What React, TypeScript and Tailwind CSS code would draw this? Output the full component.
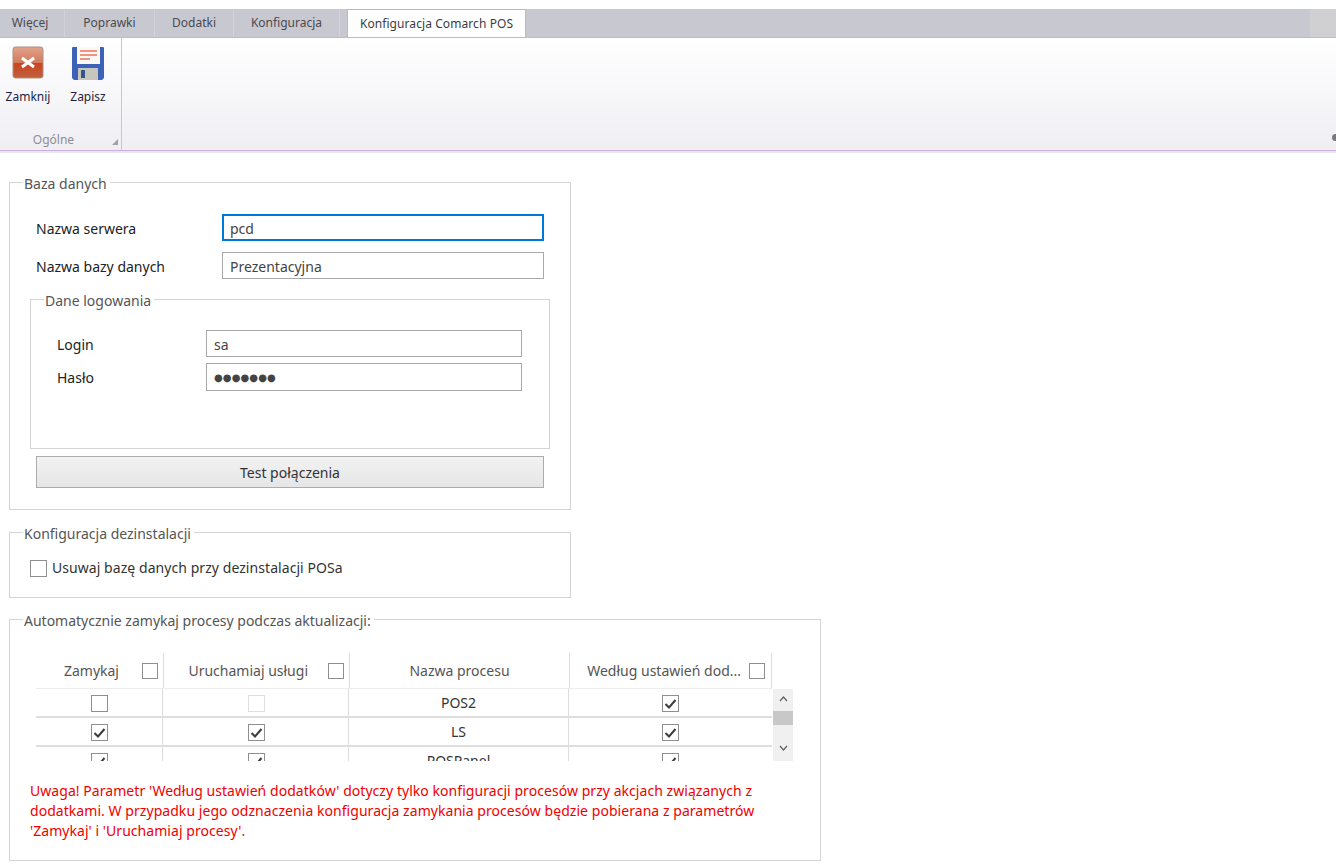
import React from 'react';

const FONT = "font-['Noto_Sans','Open_Sans',sans-serif]";

const tabs = [
  { label: 'Więcej', width: 'w-[65px] pr-[4px]' },
  { label: 'Poprawki', width: 'w-[90px]' },
  { label: 'Dodatki', width: 'w-[79px]' },
  { label: 'Konfiguracja', width: 'w-[106px]' },
];

const CloseIcon = () => (
  <svg width="32" height="33" viewBox="0 0 32 33">
    <defs>
      <linearGradient id="closeBg" x1="0" y1="0" x2="0" y2="1">
        <stop offset="0" stopColor="#e2a48c" />
        <stop offset="0.5" stopColor="#d27a5c" />
        <stop offset="0.52" stopColor="#c9441f" />
        <stop offset="1" stopColor="#c2603f" />
      </linearGradient>
    </defs>
    <rect x="1" y="1" width="30" height="31" rx="2.5" fill="url(#closeBg)" stroke="#a9917f" />
    <path d="M10 12l12 9M22 12l-12 9" stroke="#fff" strokeWidth="3.2" />
  </svg>
);

const SaveIcon = () => (
  <svg width="34" height="35" viewBox="0 0 34 35">
    <path d="M1 2a1 1 0 0 1 1-1h30a1 1 0 0 1 1 1v30l-2 2H3l-2-2z" fill="#3c62b8" />
    <rect x="6" y="1" width="23" height="17" fill="#fbf8f6" />
    <path d="M9 5h17M9 9h17M9 13h10" stroke="#f0705a" strokeWidth="1.6" />
    <rect x="7" y="22" width="20" height="12" fill="#c6c6bc" />
    <rect x="10" y="24" width="4" height="8" fill="#35558f" />
  </svg>
);

const Ribbon = () => (
  <div>
    <div className="h-[9px] bg-white" />
    <div className="flex h-[28px] bg-[#c8c8d0]">
      {tabs.map((t) => (
        <div
          key={t.label}
          className={`${t.width} flex items-center justify-center border-r border-[#d2d2d8] text-xs text-[#4a4a50]`}
        >
          {t.label}
        </div>
      ))}
      <div className="w-[7px]" />
      <div className="flex w-[179px] items-center justify-center border-x border-t border-[#c9a9e6] bg-white text-xs tracking-[0.08px] text-[#3c3c40]">
        Konfiguracja Comarch POS
      </div>
      <div className="flex-1" />
      <div className="w-[26px] bg-[#d0d0d2]" />
    </div>
    <div className="relative flex h-[114px] border-y border-[#cdaee8] bg-gradient-to-b from-white to-[#efeef3]">
      <div className="flex w-[122px] flex-col border-r border-[#c8c8cc]">
        <div className="flex h-[88px] gap-[10px] pl-[3px] pt-[8px]">
          <div className="flex w-[50px] flex-col items-center">
            <CloseIcon />
            <span className="mt-[10px] text-xs text-[#1e1e3c]">Zamknij</span>
          </div>
          <div className="flex w-[50px] flex-col items-center">
            <SaveIcon />
            <span className="mt-[8px] text-xs text-[#1e1e3c]">Zapisz</span>
          </div>
        </div>
        <div className="relative flex flex-1 items-center justify-center pr-[14px] pt-[4px] text-xs text-[#8e8e96]">
          Ogólne
          <span className="absolute bottom-[5px] right-[3px] h-0 w-0 border-b-[6px] border-l-[6px] border-b-[#a0a0a6] border-l-transparent" />
        </div>
      </div>
      <span className="absolute bottom-[9px] right-0 h-[7px] w-[4px] rounded-l-full bg-[#77777c]" />
    </div>
    <div className="h-[2px] bg-[#e8e8ea]" />
  </div>
);

const Check = ({ checked, size = 'h-[17px] w-[17px]', dim }: { checked?: boolean; size?: string; dim?: boolean }) => (
  <span
    className={`${size} flex shrink-0 items-center justify-center border bg-white ${dim ? 'border-[#dedede]' : 'border-[#8f8f8f]'}`}
  >
    {checked && (
      <svg width="13" height="13" viewBox="0 0 13 13">
        <path d="M1.5 7l3.5 3.5L11.5 3" fill="none" stroke="#3c3c3c" strokeWidth="2" />
      </svg>
    )}
  </span>
);

const Field = ({ value, focused, pad, height, width }: { value: React.ReactNode; focused?: boolean; pad: string; width: string; height: string }) => (
  <div
    className={`${width} ${height} ${pad} flex items-center text-sm text-[#444] ${
      focused ? 'border-2 border-[#0078d7] pl-[6px]' : 'border border-[#a9a9a9] pl-[7px]'
    }`}
  >
    {value}
  </div>
);

const Group = ({ title, className, children }: { title: string; className: string; children: React.ReactNode }) => (
  <fieldset className={`${className} border border-[#d4d4d4]`}>
    <legend className="ml-[13px] h-[20px] px-[1px] pr-[3px] text-sm leading-[24px] text-[#555]">{title}</legend>
    {children}
  </fieldset>
);

const rows = [
  { zamykaj: false, usl: false, uslDim: true, name: 'POS2', wg: true },
  { zamykaj: true, usl: true, name: 'LS', wg: true },
  { zamykaj: true, usl: true, name: 'POSPanel', wg: true },
];

const ProcessTable = () => (
  <div className="ml-[26px] flex">
    <div>
      <div className="flex h-[36px] border-b border-[#ececec] text-sm text-[#555]">
        <div className="flex w-[128px] items-center justify-end gap-[23px] border-r border-[#dcdcdc] pr-[5px]">
          Zamykaj <Check size="h-[16px] w-[16px]" />
        </div>
        <div className="flex w-[186px] items-center justify-end gap-[20px] border-r border-[#dcdcdc] pr-[5px]">
          Uruchamiaj usługi <Check size="h-[16px] w-[16px]" />
        </div>
        <div className="flex w-[220px] items-center justify-center border-r border-[#dcdcdc]">Nazwa procesu</div>
        <div className="flex w-[202px] items-center justify-end gap-[8px] border-r border-[#dcdcdc] pr-[6px]">
          Według ustawień dod... <Check size="h-[16px] w-[16px]" />
        </div>
      </div>
      <div className="h-[72px] overflow-hidden">
        {rows.map((r) => (
          <div key={r.name} className="flex h-[29px] border-b-2 border-[#dedede] text-sm text-[#333]">
            <div className="flex w-[127px] items-center justify-center border-r border-[#dcdcdc] pt-[2px]">
              <Check checked={r.zamykaj} />
            </div>
            <div className="ml-px flex w-[185px] items-center justify-center border-r border-[#dcdcdc] pt-[2px]">
              <Check checked={r.usl} dim={r.uslDim} />
            </div>
            <div className="flex w-[220px] items-center justify-center border-r border-[#dcdcdc] pt-[1px]">{r.name}</div>
            <div className="flex w-[202px] items-center justify-center pt-[2px]">
              <Check checked={r.wg} />
            </div>
          </div>
        ))}
      </div>
    </div>
    <div className="mt-[36px] ml-px flex h-[72px] w-[20px] flex-col items-center bg-[#f0f0f0] text-[#555]">
      <svg className="mt-[7px]" width="9" height="6" viewBox="0 0 9 6">
        <path d="M1 5l3.5-4L8 5" fill="none" stroke="#606060" strokeWidth="1.2" />
      </svg>
      <div className="mt-[9px] h-[14px] w-full bg-[#c8c8c8]" />
      <svg className="mt-[20px]" width="9" height="6" viewBox="0 0 9 6">
        <path d="M1 1l3.5 4L8 1" fill="none" stroke="#606060" strokeWidth="1.2" />
      </svg>
    </div>
  </div>
);

export default function App() {
  return (
    <div className={`${FONT} h-[867px] w-[1336px] overflow-hidden bg-white`}>
      <Ribbon />
      <div className="flex flex-col pl-[9px] pt-[19px]">
        <Group title="Baza danych" className="h-[338px] w-[562px]">
          <div className="pl-[26px] pt-[22px]">
            <div className="flex h-[26px] items-center">
              <span className="w-[186px] pt-[4px] text-sm text-[#222]">Nazwa serwera</span>
              <Field value="pcd" focused pad="pt-[4px]" width="w-[322px]" height="h-[27px]" />
            </div>
            <div className="mt-[12px] flex items-center">
              <span className="w-[186px] pt-[2px] text-sm text-[#222]">Nazwa bazy danych</span>
              <Field value="Prezentacyjna" pad="pt-[2px]" width="w-[322px]" height="h-[27px]" />
            </div>
          </div>
          <Group title="Dane logowania" className="ml-[20px] mt-[10px] h-[160px] w-[520px]">
            <div className="pl-[26px] pt-[21px]">
              <div className="flex items-center">
                <span className="w-[149px] pt-[2px] text-sm text-[#222]">Login</span>
                <Field value="sa" pad="pt-[2px]" width="w-[316px]" height="h-[27px]" />
              </div>
              <div className="mt-[6px] flex items-center">
                <span className="w-[149px] pt-[2px] text-sm text-[#222]">Hasło</span>
                <Field
                  value={<span className="font-['DejaVu_Sans',sans-serif] text-[10px] tracking-[0.1px]">●●●●●●●</span>}
                  pad="pt-[2px]"
                  width="w-[316px]"
                  height="h-[28px]"
                />
              </div>
            </div>
          </Group>
          <div className="ml-[26px] mt-[7px] flex h-[32px] w-[508px] items-center justify-center border border-[#acacac] bg-gradient-to-b from-[#f2f2f2] to-[#e6e6e6] pt-[2px] text-sm text-[#333]">
            Test połączenia
          </div>
        </Group>
        <Group title="Konfiguracja dezinstalacji" className="mt-[12px] h-[76px] w-[562px]">
          <div className="flex items-center gap-[5px] pl-[20px] pt-[16px] text-sm tracking-[0.06px] text-[#333]">
            <Check />
            Usuwaj bazę danych przy dezinstalacji POSa
          </div>
        </Group>
        <Group title="Automatycznie zamykaj procesy podczas aktualizacji:" className="mt-[11px] h-[252px] w-[812px]">
          <div className="pt-[24px]">
            <ProcessTable />
            <p className="ml-[20px] mt-[20px] w-[770px] text-sm leading-[20px] tracking-[0.05px] text-[#f00000]">
              Uwaga! Parametr 'Według ustawień dodatków' dotyczy tylko konfiguracji procesów przy akcjach związanych z
              <br />
              dodatkami. W przypadku jego odznaczenia konfiguracja zamykania procesów będzie pobierana z parametrów
              <br />
              'Zamykaj' i 'Uruchamiaj procesy'.
            </p>
          </div>
        </Group>
      </div>
    </div>
  );
}
